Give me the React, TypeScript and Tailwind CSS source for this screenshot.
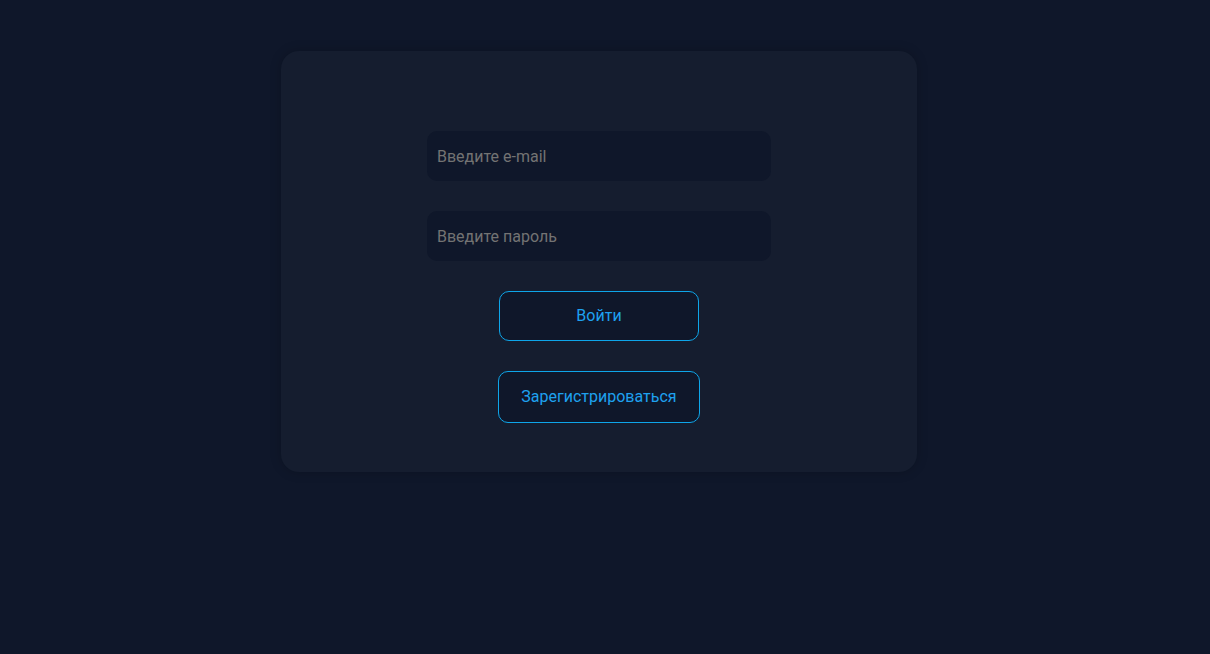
import React from "react";

export default function App() {
  return (
    <div
      className="min-h-screen w-full bg-[#0f172a] flex justify-center pt-[51px] pr-[12px]"
      style={{ fontFamily: "Roboto, 'Noto Sans', sans-serif" }}
    >
      <div className="w-[636px] h-[421px] rounded-[18px] bg-[#151d2f] shadow-[0_0_12px_rgba(0,0,0,0.2)] flex flex-col items-center pt-[80px]">
        <input
          type="email"
          placeholder="Введите e-mail"
          className="w-[344px] h-[50px] rounded-[10px] bg-[#0f172a] px-[10px] text-[16px] text-gray-300 placeholder:text-[#737373] outline-none"
        />
        <input
          type="password"
          placeholder="Введите пароль"
          className="mt-[30px] w-[344px] h-[50px] rounded-[10px] bg-[#0f172a] px-[10px] text-[16px] text-gray-300 placeholder:text-[#737373] outline-none"
        />
        <button className="mt-[30px] w-[200px] h-[50px] rounded-[10px] border border-[#0ea5e9] bg-[#0f172a] text-[16px] text-[#1ea1ef]">
          Войти
        </button>
        <button className="mt-[30px] w-[202px] h-[52px] rounded-[10px] border border-[#0ea5e9] bg-[#0f172a] text-[16px] text-[#1ea1ef]">
          Зарегистрироваться
        </button>
      </div>
    </div>
  );
}
